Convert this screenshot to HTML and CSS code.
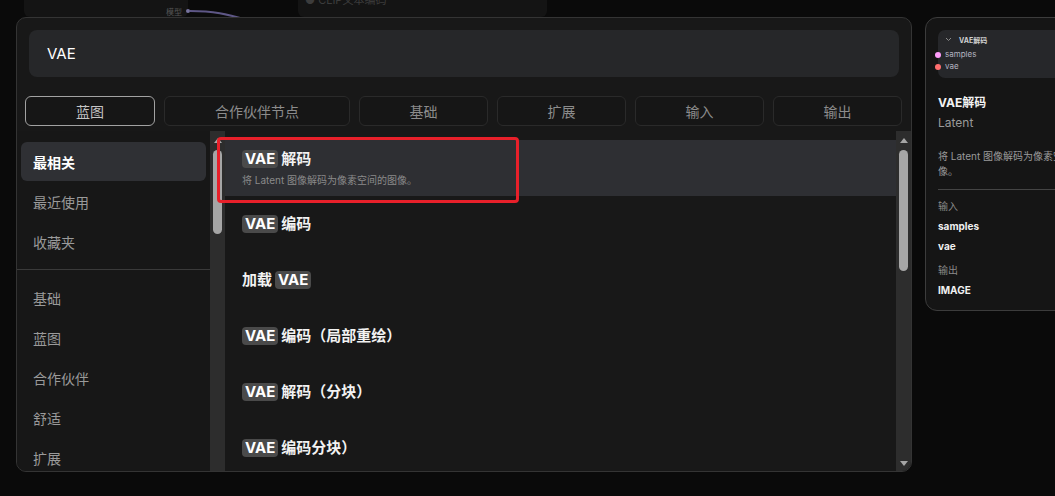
FILE: index.html
```html
<!DOCTYPE html>
<html lang="zh-CN">
<head>
    <meta charset="UTF-8">
    <meta name="viewport" content="width=device-width, initial-scale=1.0">
    <title>节点搜索</title>
    <link rel="stylesheet" href="styles.css">
</head>
<body>
    <!-- nodes on the graph canvas behind the search dialog -->
    <div class="canvas">
        <div class="bg-node bg-node-model">
            <span class="bg-slot">模型</span>
        </div>
        <svg class="bg-wire" width="80" height="20" viewBox="0 0 80 20">
            <circle cx="2" cy="11" r="2" fill="#77739f"/>
            <path d="M4 11 C 28 11, 40 14, 62 20" stroke="#5e5786" stroke-width="2" fill="none"/>
        </svg>
        <div class="bg-node bg-node-clip">
            <span class="bg-title">● CLIP文本编码</span>
        </div>
    </div>

    <div class="dialog">
        <div class="search">VAE</div>

        <div class="tabs">
            <div class="tab active">蓝图</div>
            <div class="tab">合作伙伴节点</div>
            <div class="tab">基础</div>
            <div class="tab">扩展</div>
            <div class="tab">输入</div>
            <div class="tab">输出</div>
        </div>

        <div class="panel-body">
            <div class="sidebar">
                <div class="sb-item active">最相关</div>
                <div class="sb-item">最近使用</div>
                <div class="sb-item">收藏夹</div>
                <div class="sb-divider"></div>
                <div class="sb-item">基础</div>
                <div class="sb-item">蓝图</div>
                <div class="sb-item">合作伙伴</div>
                <div class="sb-item">舒适</div>
                <div class="sb-item">扩展</div>
            </div>
            <div class="scrollbar">
                <div class="arrow-up"></div>
                <div class="thumb thumb-short"></div>
                <div class="spacer"></div>
            </div>

            <div class="results">
                <div class="result active">
                    <div class="result-title"><span class="badge">VAE</span>解码</div>
                    <div class="result-desc">将 Latent 图像解码为像素空间的图像。</div>
                </div>
                <div class="result">
                    <div class="result-title"><span class="badge">VAE</span>编码</div>
                </div>
                <div class="result">
                    <div class="result-title">加载<span class="badge">VAE</span></div>
                </div>
                <div class="result">
                    <div class="result-title"><span class="badge">VAE</span>编码（局部重绘）</div>
                </div>
                <div class="result">
                    <div class="result-title"><span class="badge">VAE</span>解码（分块）</div>
                </div>
                <div class="result">
                    <div class="result-title"><span class="badge">VAE</span>编码分块）</div>
                </div>
            </div>
            <div class="scrollbar">
                <div class="arrow-up"></div>
                <div class="thumb thumb-long"></div>
                <div class="spacer"></div>
                <div class="arrow-down"></div>
            </div>
        </div>

        <div class="focus-ring"></div>
    </div>

    <div class="preview">
        <div class="node">
            <div class="node-head">
                <svg class="chevron" width="7" height="5" viewBox="0 0 7 5">
                    <polyline points="1,1 3.5,3.5 6,1" stroke="#8a8a8a" stroke-width="1" fill="none"/>
                </svg>
                <span>VAE解码</span>
            </div>
            <div class="ports">
                <div class="port"><i class="dot dot-latent"></i>samples</div>
                <div class="port"><i class="dot dot-vae"></i>vae</div>
            </div>
        </div>
        <div class="pv-name">VAE解码</div>
        <div class="pv-cat">Latent</div>
        <div class="pv-desc">将 Latent 图像解码为像素空间的图像。</div>
        <div class="pv-divider"></div>
        <div class="pv-label">输入</div>
        <div class="pv-io">samples</div>
        <div class="pv-io">vae</div>
        <div class="pv-label pv-label-out">输出</div>
        <div class="pv-io">IMAGE</div>
    </div>
</body>
</html>
```

FILE: styles.css
```css
*, *::before, *::after {
    box-sizing: border-box;
}

body {
    margin: 0;
    width: 1055px;
    height: 496px;
    padding: 17px 0 0 16px;
    display: flex;
    align-items: flex-start;
    gap: 13px;
    overflow: hidden;
    position: relative;
    background: #0a0a0a;
    font-family: "Inter", "Noto Sans CJK SC", sans-serif;
    color: #e6e6e6;
}

/* graph canvas */
.canvas {
    position: absolute;
    top: 0;
    left: 0;
}

.bg-node {
    position: absolute;
    top: -20px;
    height: 37px;
    background: #141414;
    border-radius: 6px;
}

.bg-node-model {
    left: 24px;
    width: 164px;
}

.bg-node-clip {
    left: 298px;
    width: 249px;
}

.bg-slot {
    position: absolute;
    right: 6px;
    top: 26px;
    font-size: 8px;
    color: #555;
}

.bg-title {
    position: absolute;
    left: 7px;
    top: 14px;
    font-size: 11px;
    line-height: 13px;
    color: #3c3c3c;
}

.bg-wire {
    position: absolute;
    left: 186px;
    top: 0;
}

/* search dialog */
.dialog {
    position: relative;
    z-index: 1;
    flex-shrink: 0;
    width: 896px;
    height: 455px;
    display: flex;
    flex-direction: column;
    background: #181818;
    border: 1px solid #343434;
    border-radius: 10px;
    overflow: hidden;
}

.search {
    margin: 12px 12px 0;
    height: 47px;
    padding-left: 18px;
    display: flex;
    align-items: center;
    background: #262729;
    border-radius: 8px;
    font-size: 15px;
    color: #fff;
}

.tabs {
    margin: 19px 9px 0 8px;
    height: 30px;
    display: grid;
    grid-template-columns: 130px 186px repeat(4, 1fr);
    gap: 9px;
}

.tab {
    display: flex;
    align-items: center;
    justify-content: center;
    border: 1px solid #2a2a2a;
    border-radius: 6px;
    background: #161616;
    font-size: 14px;
    color: #8c8c8c;
}

.tab.active {
    border-color: #a2a2a2;
    color: #c4c4c4;
}

.panel-body {
    margin-top: 5px;
    flex: 1;
    min-height: 0;
    display: flex;
}

.sidebar {
    width: 193px;
    padding-top: 11px;
    overflow: hidden;
    background: #171717;
}

.sb-item {
    height: 39px;
    margin: 0 4px 1px;
    padding-left: 12px;
    display: flex;
    align-items: center;
    border-radius: 6px;
    font-size: 14px;
    color: #9a9a9a;
}

.sb-item.active {
    background: #2f3034;
    color: #fff;
    font-weight: 700;
}

.sb-divider {
    height: 1px;
    margin: 8px 0;
    background: #3a3a3a;
}

.scrollbar {
    width: 15px;
    flex-shrink: 0;
    display: flex;
    flex-direction: column;
    align-items: center;
    background: #2d2d2d;
}

.arrow-up,
.arrow-down {
    width: 0;
    height: 0;
    border-left: 4.5px solid transparent;
    border-right: 4.5px solid transparent;
}

.arrow-up {
    margin-top: 7px;
    border-bottom: 5px solid #a6a6a6;
}

.arrow-down {
    margin-bottom: 5px;
    border-top: 5px solid #a6a6a6;
}

.thumb {
    width: 9px;
    margin-top: 7px;
    border-radius: 5px;
    background: #a6a6a6;
}

.thumb-short {
    height: 84px;
}

.thumb-long {
    height: 121px;
}

.spacer {
    flex: 1;
}

.results {
    flex: 1;
    padding-top: 9px;
    overflow: hidden;
    background: #181818;
}

.result {
    height: 56px;
    padding-left: 17px;
    display: flex;
    flex-direction: column;
    justify-content: center;
    gap: 4px;
}

.result.active {
    background: #2e2f33;
}

.result-title {
    display: flex;
    align-items: center;
    gap: 3px;
    font-size: 15px;
    font-weight: 700;
    line-height: 20px;
    color: #f2f2f2;
}

.badge {
    padding: 0 3px;
    line-height: 18px;
    border-radius: 4px;
    background: #4a4a4a;
    color: #fff;
}

.result-desc {
    font-size: 10px;
    line-height: 14px;
    color: #8a8a8a;
}

.focus-ring {
    position: absolute;
    left: 200px;
    top: 119px;
    width: 302px;
    height: 66px;
    border: 3px solid #e8202a;
    border-radius: 4px;
}

/* node preview */
.preview {
    width: 190px;
    height: 294px;
    flex-shrink: 0;
    padding: 12px 0 0 12px;
    background: #151515;
    border: 1px solid #3c3c3c;
    border-radius: 12px;
}

.node {
    position: relative;
    height: 48px;
    padding: 5px 0 0 7px;
    background: #26272a;
    border-radius: 7px;
}

.node-head {
    display: flex;
    align-items: center;
    gap: 7px;
    height: 9px;
    font-size: 7px;
    font-weight: 700;
    color: #d0d0d0;
}

.ports {
    margin-top: 6px;
    display: flex;
    flex-direction: column;
    gap: 3px;
}

.port {
    position: relative;
    line-height: 9px;
    font-size: 8px;
    color: #b4b4c0;
}

.dot {
    position: absolute;
    left: -10px;
    top: 1.5px;
    width: 6px;
    height: 6px;
    border-radius: 50%;
}

.dot-latent {
    background: #ff9cf9;
}

.dot-vae {
    background: #ff6e6e;
}

.pv-name {
    margin-top: 17px;
    font-size: 12px;
    font-weight: 700;
    line-height: 16px;
    color: #f2f2f2;
}

.pv-cat {
    margin-top: 4px;
    font-size: 12px;
    line-height: 16px;
    color: #9a9a9a;
}

.pv-desc {
    margin-top: 18px;
    padding-right: 12px;
    font-size: 10px;
    line-height: 15px;
    color: #9a9a9a;
}

.pv-divider {
    height: 1px;
    margin-top: 10px;
    background: #444;
}

.pv-label {
    margin-top: 9px;
    font-size: 10px;
    line-height: 14px;
    color: #8a8a8a;
}

.pv-label-out {
    margin-top: 10px;
}

.pv-io {
    margin-top: 6px;
    font-size: 10px;
    font-weight: 700;
    line-height: 14px;
    color: #f0f0f0;
}
```
